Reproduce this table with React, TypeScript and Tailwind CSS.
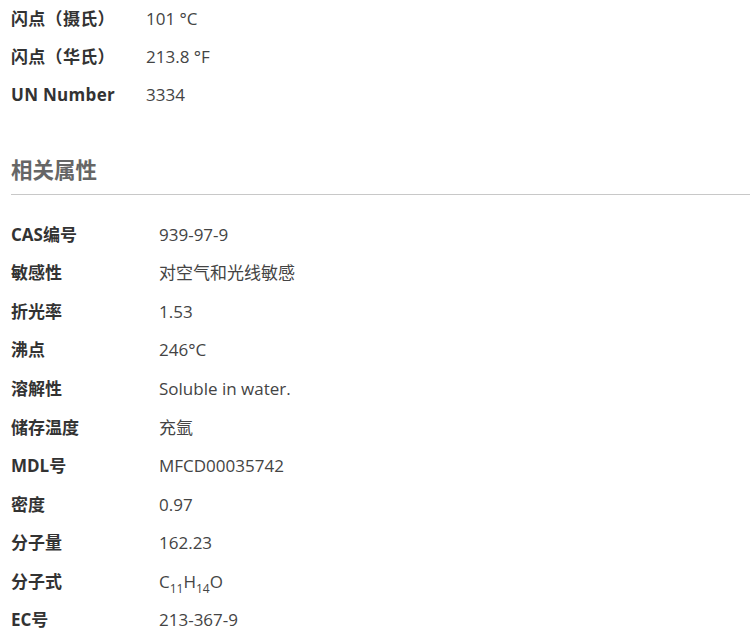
export default function App() {
  const top = [
    ['闪点（摄氏）', '101 °C'],
    ['闪点（华氏）', '213.8 °F'],
    ['UN Number', '3334'],
  ]
  const props: [string, React.ReactNode][] = [
    ['CAS编号', '939-97-9'],
    ['敏感性', '对空气和光线敏感'],
    ['折光率', '1.53'],
    ['沸点', '246°C'],
    ['溶解性', 'Soluble in water.'],
    ['储存温度', '充氩'],
    ['MDL号', 'MFCD00035742'],
    ['密度', '0.97'],
    ['分子量', '162.23'],
    [
      '分子式',
      <span>
        C<sub className="text-[12px] align-[-2px]">11</sub>H<sub className="text-[12px] align-[-2px]">14</sub>O
      </span>,
    ],
    ['EC号', '213-367-9'],
  ]

  return (
    <div
      className="w-[750px] h-[638px] overflow-hidden bg-white pl-[11px] text-[17px]"
      style={{ fontFamily: '"Open Sans", "Noto Sans CJK SC", sans-serif' }}
    >
      <div className="flex flex-col">
        {top.map(([k, v]) => (
          <div key={k} className="flex items-center h-[38px]">
            <div className="w-[135px] font-bold text-[#333] tracking-[0.3px]">{k}</div>
            <div className="text-[#444]">{v}</div>
          </div>
        ))}
      </div>

      <h2 className="mt-[41px] text-[21.5px] font-bold text-[#666] leading-[30px]">相关属性</h2>
      <div className="mt-[9px] h-px bg-[#c8c8c8]" />

      <div className="flex flex-col pt-[20px]">
        {props.map(([k, v]) => (
          <div key={k} className="flex items-center h-[38.6px]">
            <div className="w-[148px] font-bold text-[#333]">{k}</div>
            <div className="text-[#444]">{v}</div>
          </div>
        ))}
      </div>
    </div>
  )
}
